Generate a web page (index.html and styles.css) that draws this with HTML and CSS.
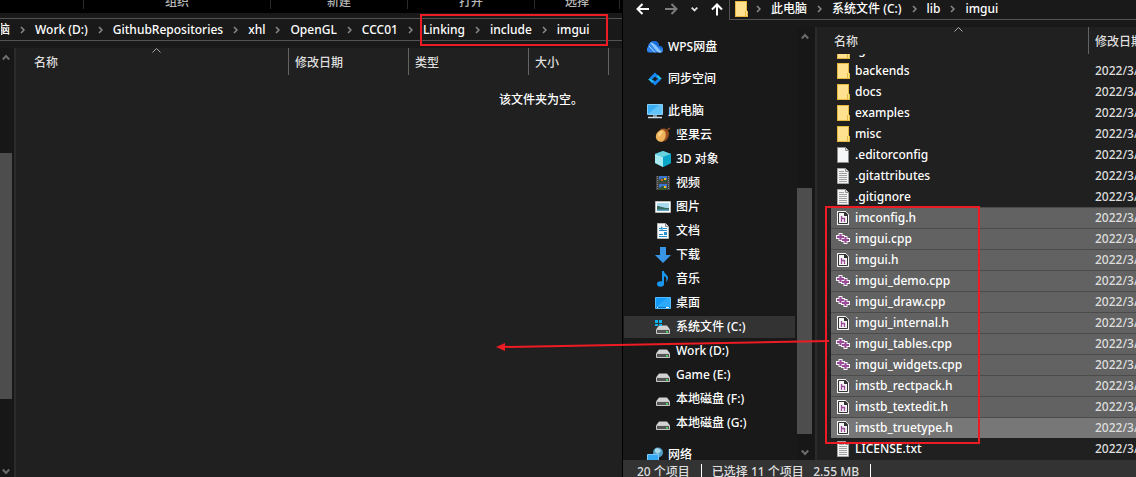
FILE: index.html
```html
<!DOCTYPE html>
<html lang="zh-CN">
<head>
<meta charset="utf-8">
<title>imgui</title>
<link rel="stylesheet" href="styles.css">
</head>
<body>
<svg class="defs" aria-hidden="true">
  <symbol id="chev" viewBox="0 0 5 8"><path d="M1 1l3 3-3 3" fill="none" stroke="#8a8a8a" stroke-width="1.5"/></symbol>
  <symbol id="sort" viewBox="0 0 9 5"><path d="M.5 4.5l4-4 4 4" fill="none" stroke="#a8a8a8"/></symbol>
  <symbol id="up" viewBox="0 0 8 7"><path d="M.8 5.5L4 2l3.200 3.500" fill="none" stroke="#6c6c6c" stroke-width="2"/></symbol>
  <symbol id="down" viewBox="0 0 8 7"><path d="M.8 1.500L4 5l3.200-3.500" fill="none" stroke="#6c6c6c" stroke-width="2"/></symbol>
  <symbol id="folder" viewBox="0 0 14 16"><path d="M1 0h12v10h1v6H1z" fill="#ffe18f"/><path d="M1 .5h12M1.500 0v16M12.500 0v9.500M11.500 10v6M13.500 10v6M1 15.500h13" stroke="#e5b93f" fill="none"/></symbol>
  <symbol id="page" viewBox="0 0 14 16"><path d="M1.500.5h8l3 3v12h-11z" fill="#f5f7f8" stroke="#8e8e8e"/><path d="M9.500.5v3h3" fill="#ddd" stroke="#8e8e8e"/></symbol>
  <symbol id="text" viewBox="0 0 14 16"><path d="M1.500.5h8l3 3v12h-11z" fill="#f5f5f5" stroke="#a5a5a5"/><path d="M9.500.5v3h3" fill="#ddd" stroke="#8e8e8e"/><path d="M3 3.500h5M3 5.500h8M3 7.500h8M3 9.500h8M3 11.500h8M3 13.500h8" stroke="#a0a0a0"/></symbol>
  <symbol id="hfile" viewBox="0 0 14 16"><path d="M1 1h8.500L13 4.500V15H1z" fill="#f4f4f4"/><path d="M2.500 2.500h6.500l2.500 2.500v8.500h-9z" fill="#f4f4f4" stroke="#333"/><path d="M8 2h1.500L12 4.500V6H8z" fill="#333"/><path d="M5.500 6v6M5.500 8.500h3v3.500" fill="none" stroke="#9a4b97" stroke-width="1.300"/></symbol>
  <symbol id="cpp" viewBox="0 0 14 12"><path d="M4.500 0v8M0 4h9M9.500 3v8M5 7h9" stroke="#f5f5f5" stroke-width="4"/><path d="M4.500 1v6M1 4h7M9.500 4v6M6 7h7" stroke="#9a4b97" stroke-width="2.200"/></symbol>
  <symbol id="drive" viewBox="0 0 16 16"><path d="M4 6.500h8l3 4H1z" fill="#d2d2d2"/><path d="M1.500 10.500h13v4h-13z" fill="#555" stroke="#c8c8c8"/><path d="M11 12h2v1.500h-2z" fill="#48e66a"/></symbol>
</svg>

<div class="desktop">
  <section class="window" aria-label="imgui - include">
    <div class="ribbon">
      <span></span><span>组织</span><span>新建</span><span>打开</span><span>选择</span>
    </div>
    <nav class="crumbs crumbs-left" aria-label="路径">
      <a href="#">脑</a><svg><use href="#chev"/></svg>
      <a href="#">Work (D:)</a><svg><use href="#chev"/></svg>
      <a href="#">GithubRepositories</a><svg><use href="#chev"/></svg>
      <a href="#">xhl</a><svg><use href="#chev"/></svg>
      <a href="#">OpenGL</a><svg><use href="#chev"/></svg>
      <a href="#">CCC01</a><svg><use href="#chev"/></svg>
      <a href="#">Linking</a><svg><use href="#chev"/></svg>
      <a href="#">include</a><svg><use href="#chev"/></svg>
      <a href="#">imgui</a>
    </nav>
    <div class="body">
      <div class="scroll scroll-left">
        <svg class="arrow"><use href="#up"/></svg><i class="thumb"></i><svg class="arrow"><use href="#down"/></svg>
      </div>
      <div class="pane">
        <table class="files files-left">
          <thead><tr><th class="name">名称<svg class="sort"><use href="#sort"/></svg></th><th class="col">修改日期</th><th class="col">类型</th><th class="small">大小</th><th class="rest"></th></tr></thead>
        </table>
        <p class="empty">该文件夹为空。</p>
      </div>
    </div>
  </section>

  <section class="window window-right" aria-label="imgui - lib">
    <div class="toolbar">
      <div class="history">
        <button aria-label="后退"><svg width="14" height="12" viewBox="0 0 14 12"><path d="M13 6H2M6.500 1L1.500 6l5 5" fill="none" stroke="#fff" stroke-width="2"/></svg></button>
        <button aria-label="前进"><svg width="14" height="12" viewBox="0 0 14 12"><path d="M1 6h11M7.500 1l5 5-5 5" fill="none" stroke="#7d7d7d" stroke-width="2"/></svg></button>
        <button class="recent" aria-label="最近"><svg width="7" height="5" viewBox="0 0 7 5"><path d="M.7.7l2.800 2.800L6.300.7" fill="none" stroke="#ddd" stroke-width="1.800"/></svg></button>
        <button aria-label="上移"><svg width="12" height="13" viewBox="0 0 12 13"><path d="M6 12.500V2M1 6.500l5-5 5 5" fill="none" stroke="#fff" stroke-width="2"/></svg></button>
      </div>
      <nav class="crumbs crumbs-right" aria-label="路径">
        <svg class="icon-file"><use href="#folder"/></svg><svg><use href="#chev"/></svg>
        <a href="#">此电脑</a><svg><use href="#chev"/></svg>
        <a href="#">系统文件 (C:)</a><svg><use href="#chev"/></svg>
        <a href="#">lib</a><svg><use href="#chev"/></svg>
        <a href="#">imgui</a>
      </nav>
    </div>
    <div class="body">
      <nav class="tree" aria-label="导航窗格">
        <a href="#" class="root"><svg viewBox="0 0 16 16"><path d="M3 13.500a3 3 0 0 1-2-5.500C1 5 4 2 7 2c3 0 5 2 5 5 3 0 4 2 4 4 0 2-1 2.500-3 2.500z" fill="#2f86ee"/><path d="M3 4c4-2 7 5 12 9-1 1-4 .5-5-.5C7 9 5 6 3 4z" fill="#8cc6ff"/><path d="M5 3c3-2 7 0 7 4 3 0 4 2 4 4z" fill="#1769d8"/><path d="M2 7l6 6.500" stroke="#b8dcff"/></svg>WPS网盘</a>
        <a href="#" class="root"><svg viewBox="0 0 16 16"><path d="M3 8.500L8 3.500l3 3" fill="none" stroke="#1687f5" stroke-width="3"/><path d="M13 7.500l-5 5-3-3" fill="none" stroke="#1687f5" stroke-width="3"/><path d="M1 8h3l2 2-1 2zM15 8h-3l-2-2 1-2z" fill="#24c8f7"/></svg>同步空间</a>
        <a href="#" class="root"><svg viewBox="0 0 16 16"><path d="M.5 1.500h15v10H.5z" fill="#39aef5" stroke="#8acdf4"/><path d="M1 11L12 2h3v9z" fill="#62c4fb"/><path d="M6 12h4v2H6z" fill="#7894a6"/><path d="M1 14.500h14" stroke="#cfdce5" stroke-width="1.500"/></svg>此电脑</a>
        <a href="#"><svg viewBox="0 0 16 16"><path d="M5 3c3-3 8-1 9 3 0 5-3 9-8 9z" fill="#9a511f"/><path d="M1 11C0 6 5 2 8 3s4 6 1 10c-2 3-7 2-8-2z" fill="#efb45b"/><path d="M3 7l3-3 2 1-4 5z" fill="#ffd58a"/><path d="M12 3l3-2" stroke="#9a511f" stroke-width="1.500"/></svg>坚果云</a>
        <a href="#"><svg viewBox="0 0 16 16"><path d="M8 0l8 3v9l-8 4-8-4V3z" fill="#25b6d4"/><path d="M0 3l8 3v10l-8-4z" fill="#a8eaf2"/><path d="M0 3l8-3 8 3-8 3z" fill="#68d2df"/><path d="M8 6l8-3v9l-8 4z" fill="#08a6c9"/></svg>3D 对象</a>
        <a href="#"><svg viewBox="0 0 16 16"><path d="M1 1h14v14H1z" fill="#444"/><path d="M4 1h8v6H4zM4 9h8v6H4z" fill="#3974ce"/><path d="M4 5l4-2 4 2v2H4zM4 13l4-2 4 2v2H4z" fill="#32552b"/><path d="M9 3h2v2H9zM9 11h2v2H9z" fill="#f0c22a"/><path d="M6 4h2v2H6z" fill="#d45332"/><path d="M2.500 1v14M13.500 1v14" stroke="#858585" stroke-dasharray="1 1"/></svg>视频</a>
        <a href="#"><svg viewBox="0 0 16 16"><path d="M.5 2.500h15v11H.5z" fill="#fff" stroke="#b9b9b9"/><path d="M2 4h12v8H2z" fill="#a9d9ef"/><path d="M2 7c4 0 5 2 12 2v3H2z" fill="#386b60"/><path d="M2 10.500h12V12H2z" fill="#5fa4c3"/></svg>图片</a>
        <a href="#"><svg viewBox="0 0 16 16"><path d="M2.500.5h8l3 3v12h-11z" fill="#f6fafc" stroke="#b8b8b8"/><path d="M10.500.5v3h3" fill="#ddd" stroke="#888"/><path d="M4 5.500h2M8 5.500h4M4 7.500h8M4 11.500h4M4 13.500h8" stroke="#278fca"/><path d="M5 6l2-3 1 4M9 9h3v3H9z" fill="#278fca"/></svg>文档</a>
        <a href="#"><svg viewBox="0 0 16 16"><path d="M5 0h6v8h5l-8 8-8-8h5z" fill="#3995e5"/></svg>下载</a>
        <a href="#"><svg viewBox="0 0 16 16"><ellipse cx="5.500" cy="13" rx="3.500" ry="2.800" fill="#1899ef"/><path d="M7 13V0h2c0 3 4 4 4 7 0 2-1 3-2 4 1-4 0-5-2-6v8z" fill="#1899ef"/></svg>音乐</a>
        <a href="#"><svg viewBox="0 0 16 16"><path d="M.5 2.500h15v11H.5z" fill="#139bf7" stroke="#52baff"/><path d="M1 12L12 3h3v9z" fill="#2daafb"/><path d="M1 12.500h14" stroke="#087acb"/><path d="M2 12.500h1M11 12.500h3" stroke="#fff"/></svg>桌面</a>
        <a href="#" class="current" aria-current="true"><svg viewBox="0 0 16 16"><use href="#drive"/><path d="M0 1h3v3H0zM4 1h3v3H4zM0 5h3v2H0zM4 5h3v2H4z" fill="#10b5f0"/></svg>系统文件 (C:)</a>
        <a href="#"><svg><use href="#drive"/></svg>Work (D:)</a>
        <a href="#"><svg><use href="#drive"/></svg>Game (E:)</a>
        <a href="#"><svg><use href="#drive"/></svg>本地磁盘 (F:)</a>
        <a href="#"><svg><use href="#drive"/></svg>本地磁盘 (G:)</a>
        <a href="#" class="root"><svg viewBox="0 0 16 16"><circle cx="11" cy="5.500" r="5" fill="#4f9fc7"/><path d="M8 2c3-2 5 0 6 2l-3 3-3-2z" fill="#a9d8e9"/><path d="M.5 7.500h11v7H.5z" fill="#35a9f2" stroke="#80c9f5"/><path d="M3 15.500h7" stroke="#ccc"/></svg>网络</a>
      </nav>
      <div class="scroll scroll-right">
        <svg class="arrow"><use href="#up"/></svg><i class="thumb"></i><svg class="arrow"><use href="#down"/></svg>
      </div>
      <div class="pane">
        <table class="files files-right">
          <thead><tr><th class="name">名称<svg class="sort"><use href="#sort"/></svg></th><th class="rest">修改日期</th></tr></thead>
          <tbody>
            <tr class="clipped"><td><div><span><svg class="icon-file"><use href="#folder"/></svg>.github</span></div></td><td><div><span>2022/3/</span></div></td></tr>
            <tr><td><svg class="icon-file"><use href="#folder"/></svg>backends</td><td>2022/3/</td></tr>
            <tr><td><svg class="icon-file"><use href="#folder"/></svg>docs</td><td>2022/3/</td></tr>
            <tr><td><svg class="icon-file"><use href="#folder"/></svg>examples</td><td>2022/3/</td></tr>
            <tr><td><svg class="icon-file"><use href="#folder"/></svg>misc</td><td>2022/3/</td></tr>
            <tr><td><svg class="icon-file"><use href="#page"/></svg>.editorconfig</td><td>2022/3/</td></tr>
            <tr><td><svg class="icon-file"><use href="#text"/></svg>.gitattributes</td><td>2022/3/</td></tr>
            <tr><td><svg class="icon-file"><use href="#text"/></svg>.gitignore</td><td>2022/3/</td></tr>
            <tr class="selected"><td><svg class="icon-file"><use href="#hfile"/></svg>imconfig.h</td><td>2022/3/</td></tr>
            <tr class="selected"><td><svg class="icon-file"><use href="#cpp"/></svg>imgui.cpp</td><td>2022/3/</td></tr>
            <tr class="selected"><td><svg class="icon-file"><use href="#hfile"/></svg>imgui.h</td><td>2022/3/</td></tr>
            <tr class="selected"><td><svg class="icon-file"><use href="#cpp"/></svg>imgui_demo.cpp</td><td>2022/3/</td></tr>
            <tr class="selected"><td><svg class="icon-file"><use href="#cpp"/></svg>imgui_draw.cpp</td><td>2022/3/</td></tr>
            <tr class="selected"><td><svg class="icon-file"><use href="#hfile"/></svg>imgui_internal.h</td><td>2022/3/</td></tr>
            <tr class="selected"><td><svg class="icon-file"><use href="#cpp"/></svg>imgui_tables.cpp</td><td>2022/3/</td></tr>
            <tr class="selected"><td><svg class="icon-file"><use href="#cpp"/></svg>imgui_widgets.cpp</td><td>2022/3/</td></tr>
            <tr class="selected"><td><svg class="icon-file"><use href="#hfile"/></svg>imstb_rectpack.h</td><td>2022/3/</td></tr>
            <tr class="selected"><td><svg class="icon-file"><use href="#hfile"/></svg>imstb_textedit.h</td><td>2022/3/</td></tr>
            <tr class="selected focused"><td><svg class="icon-file"><use href="#hfile"/></svg>imstb_truetype.h</td><td>2022/3/</td></tr>
            <tr><td><svg class="icon-file"><use href="#text"/></svg>LICENSE.txt</td><td>2022/3/</td></tr>
          </tbody>
        </table>
      </div>
    </div>
    <footer class="status"><span>20 个项目</span><span>已选择 11 个项目&nbsp;&nbsp; 2.55 MB</span></footer>
  </section>

  <svg class="marks" aria-hidden="true">
    <g fill="none" stroke="#ed1c24" stroke-width="2">
      <rect x="421" y="15" width="186" height="30"/>
      <rect x="826" y="207" width="153" height="236"/>
      <path d="M829 341L503 347"/>
    </g>
    <path d="M496 347l9-4v8z" fill="#ed1c24"/>
  </svg>
</div>
</body>
</html>
```

FILE: styles.css
```css
* {
  box-sizing: border-box;
}

body {
  margin: 0;
  background: #000;
  color: #fff;
  font: 500 12px/16px "Noto Sans", "Noto Sans CJK SC", sans-serif;
}

a {
  color: inherit;
  text-decoration: none;
}

svg {
  flex: none;
}

.defs {
  display: none;
}

.desktop {
  position: relative;
  display: grid;
  grid-template-columns: 623fr 513fr;
  height: 100vh;
  overflow: hidden;
}

.window {
  display: flex;
  flex-direction: column;
  min-width: 0;
  min-height: 0;
  overflow: hidden;
  background: #191919;
  border-right: 1px solid #000;
}

.window-right {
  border-right: 0;
}

/* Ribbon group captions */
.ribbon {
  display: grid;
  grid-template-columns: 84fr 187fr 137fr 127fr 85fr 2fr;
  height: 13px;
  overflow: hidden;
  background: #000;
  color: #b8b8b8;
}

.ribbon span {
  height: 9px;
  border-right: 1px solid #2b2b2b;
  line-height: 4px;
  text-align: center;
}

/* Address bars */
.crumbs {
  display: flex;
  align-items: center;
  white-space: nowrap;
}

.crumbs svg {
  width: 5px;
  height: 8px;
  margin: 0 10px;
}

.crumbs-left {
  height: 23px;
  margin: 5px 0 7px;
  padding-left: 1px;
  border: solid #535353;
  border-width: 1px 0;
}

.crumbs-left a:first-child {
  width: 9px;
  direction: rtl;
  overflow: hidden;
}

.crumbs-right {
  flex: 1;
  min-width: 0;
  height: 20px;
  padding: 0 0 2px 4px;
  border: solid #535353;
  border-width: 0 0 1px 1px;
}

.crumbs .icon-file {
  width: 14px;
  height: 16px;
  margin: 0 -2px 0 0;
}

.toolbar {
  display: flex;
  height: 27px;
}

.history {
  display: flex;
  align-items: center;
  gap: 14px;
  width: 106px;
  height: 18px;
  padding-left: 13px;
}

.history button {
  display: flex;
  padding: 0;
  border: 0;
  background: none;
}

.history .recent {
  margin: 0 -1px;
}

/* Scroll bars */
.body {
  display: flex;
  flex: 1;
  min-height: 0;
}

.scroll {
  display: grid;
  flex: none;
  justify-items: center;
  align-items: center;
}

.scroll-left {
  grid-template-rows: 18px 87fr 246fr 66fr 12px;
  width: 14px;
  padding-right: 2px;
  background: #171717;
}

.scroll-right {
  grid-template-rows: 18px 143fr 246fr 10fr 16px;
  width: 18px;
  padding-right: 3px;
  background: #171717;
}

.arrow {
  width: 8px;
  height: 7px;
}

.arrow:last-child {
  grid-row: 5;
}

.thumb {
  grid-row: 3;
  width: 100%;
  height: 100%;
  background: #4d4d4d;
}

/* File lists */
.pane {
  flex: 1;
  min-width: 0;
  overflow: hidden;
  background: #202020;
  border-left: 2px solid #2b2b2b;
}

.files {
  width: 100%;
  border-collapse: separate;
  border-spacing: 0;
  table-layout: fixed;
}

.files th {
  position: relative;
  height: 27px;
  padding: 2px 0 0 6px;
  border-left: 1px solid #636363;
  color: #dedede;
  font-weight: inherit;
  text-align: left;
  white-space: nowrap;
}

.files th.name {
  border-left: 0;
}

.sort {
  position: absolute;
  top: 0;
  left: 50%;
  width: 9px;
  height: 5px;
}

.files-left .name {
  width: 272px;
  padding-left: 18px;
}

.files-left .col {
  width: 120px;
}

.files-left .small {
  width: 80px;
}

.files-right {
  padding-left: 14px;
}

.files-right .name {
  width: 257px;
  padding-left: 3px;
}

.files-right .sort {
  left: 48%;
}

.files td {
  height: 21px;
  padding: 0 0 0 7px;
  overflow: hidden;
  color: #dedede;
  line-height: 20px;
  white-space: nowrap;
}

.files td:first-child {
  padding-left: 5px;
  color: #fff;
}

.icon-file {
  width: 14px;
  height: 16px;
}

.files .icon-file {
  margin-right: 5px;
  vertical-align: middle;
}

.files .clipped td {
  height: 6px;
}

.clipped div {
  display: flex;
  align-items: flex-end;
  height: 6px;
  overflow: hidden;
}

.selected td {
  background: #626262;
  box-shadow: inset 0 1px #4b4b4b;
}

.files .focused td {
  background: #777;
}

.empty {
  margin: 17px 0 0 483px;
  white-space: nowrap;
}

/* Navigation tree */
.tree {
  display: flex;
  flex: none;
  flex-direction: column;
  width: 174px;
  padding-top: 8px;
  overflow: hidden;
}

.tree a {
  display: flex;
  flex: none;
  align-items: center;
  gap: 5px;
  height: 22px;
  margin: 1px 2px 1px 1px;
  padding-left: 31px;
  white-space: nowrap;
}

.tree .root {
  margin-bottom: 9px;
  padding-left: 23px;
}

.tree .root:nth-child(3) {
  margin-bottom: 1px;
}

.tree .root:last-child {
  margin-top: 9px;
}

.tree svg {
  width: 16px;
  height: 16px;
}

.tree .current {
  background: #333;
}

/* Status bar */
.status {
  display: flex;
  flex: none;
  height: 17px;
  padding: 4px 0 0 14px;
  overflow: hidden;
  background: #333;
  color: #dedede;
}

.status span {
  margin-right: 10px;
  padding-right: 11px;
  border-right: 1px solid #fff;
  white-space: nowrap;
}

/* Annotation layer */
.marks {
  position: absolute;
  inset: 0;
  width: 100%;
  height: 100%;
  pointer-events: none;
}
```
